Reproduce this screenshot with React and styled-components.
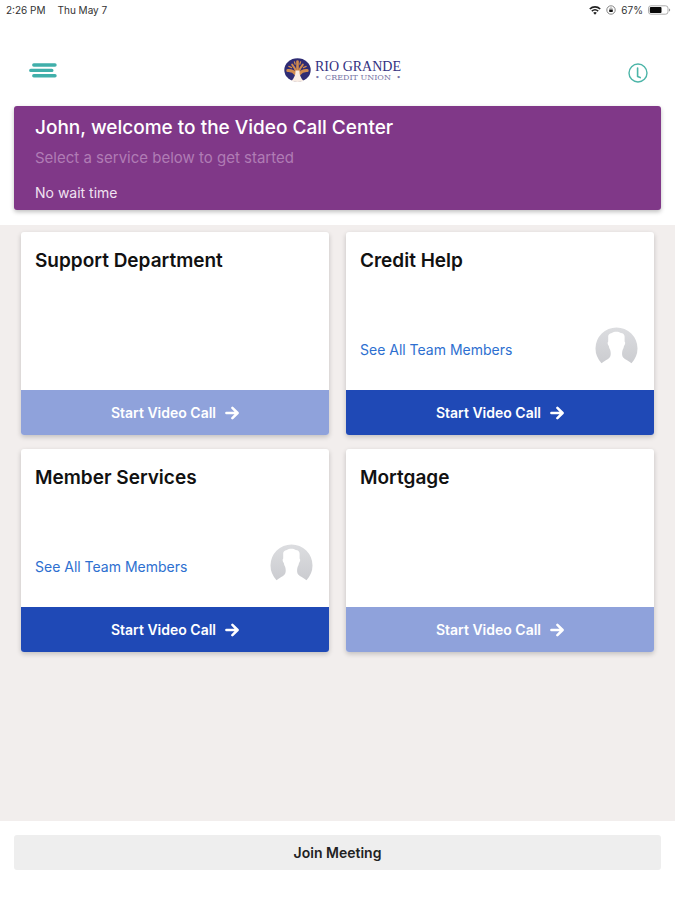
import React from "react";
import styled, { createGlobalStyle } from "styled-components";

const GlobalStyle = createGlobalStyle`
  * {
    box-sizing: border-box;
  }

  body {
    margin: 0;
    background: #fff;
    color: #111;
    font-family: Inter, "Open Sans", sans-serif;
  }

  button {
    border: 0;
    font-family: inherit;
    cursor: pointer;
  }
`;

const Page = styled.div`
  min-height: 100vh;
  display: flex;
  flex-direction: column;
`;

const StatusBar = styled.div`
  height: 20px;
  padding: 0 4px 0 6px;
  display: flex;
  align-items: center;
  justify-content: space-between;
  line-height: 20px;
  color: #333;
`;

const StatusGroup = styled.div`
  display: flex;
  align-items: center;
  gap: ${(props) => props.$gap};
  font-size: 10px;
`;

const Header = styled.header`
  height: 86px;
  padding: 0 26px;
  display: grid;
  grid-template-columns: 1fr auto 1fr;
  align-items: start;
`;

const IconButton = styled.button`
  display: flex;
  justify-self: ${(props) => props.$side};
  padding: ${(props) => props.$pad};
  background: none;
`;

const Logo = styled.div`
  display: flex;
  align-items: center;
  gap: 4px;
  padding: 38px 0 0 10px;
`;

const LogoText = styled.div`
  padding-top: 2px;
  color: #33317f;
  font-family: "Liberation Serif", serif;
`;

const LogoName = styled.div`
  font-size: 14px;
  line-height: 14px;
  white-space: nowrap;
`;

const LogoSub = styled.div`
  display: flex;
  align-items: center;
  justify-content: space-between;
  font-family: "DejaVu Serif", serif;
  font-size: 8px;
  line-height: 8px;
  color: #7775a6;
`;

const Banner = styled.section`
  margin: 0 14px 15px;
  height: 104px;
  padding: 10px 21px;
  border-radius: 3px;
  background: #803888;
  color: #fff;
  box-shadow: 0 2px 4px rgba(0, 0, 0, 0.25);
`;

const BannerTitle = styled.h1`
  margin: 0;
  font-size: 19px;
  line-height: 24px;
  font-weight: 500;
`;

const BannerText = styled.p`
  margin: 7px 0 0;
  font-size: 15px;
  line-height: 22px;
  color: #b07cb5;
`;

const WaitTime = styled.p`
  margin: 14px 0 0;
  font-size: 14px;
  line-height: 20px;
  color: #f0e2f1;
`;

const Main = styled.main`
  flex: 1;
  padding: 7px 21px 14px;
  background: #f2eeed;
`;

const Cards = styled.div`
  display: grid;
  grid-template-columns: 1fr 1fr;
  gap: 14px 17px;
`;

const Card = styled.article`
  height: 203px;
  display: flex;
  flex-direction: column;
  border-radius: 3px;
  overflow: hidden;
  background: #fff;
  box-shadow: 0 2px 5px rgba(0, 0, 0, 0.2);
`;

const CardTitle = styled.h2`
  margin: 0;
  padding: 17px 14px 0;
  font-size: 19px;
  line-height: 24px;
  font-weight: 600;
`;

const Team = styled.div`
  flex: 1;
  display: flex;
  align-items: center;
  justify-content: space-between;
  padding: 28px 16px 0 14px;
`;

const TeamLink = styled.a`
  padding-top: 8px;
  font-size: 14px;
  line-height: 20px;
  color: #2d6fd0;
  text-decoration: none;
`;

const CallButton = styled.button`
  height: 45px;
  display: flex;
  align-items: center;
  justify-content: center;
  gap: 9px;
  background: ${(props) => (props.disabled ? "#8fa2db" : "#1f49b6")};
  color: #fff;
  font-size: 14px;
  font-weight: 600;
`;

const Footer = styled.footer`
  padding: 14px 14px 30px;
  background: #fff;
`;

const JoinButton = styled.button`
  width: 100%;
  height: 35px;
  border-radius: 3px;
  background: #eee;
  color: #222;
  font-size: 14px;
  font-weight: 600;
`;

const departments = [
  { name: "Support Department", open: false },
  { name: "Credit Help", open: true },
  { name: "Member Services", open: true },
  { name: "Mortgage", open: false },
];

function WifiIcon() {
  return (
    <svg width="12" height="9" viewBox="0 0 12 9" fill="none" stroke="#222">
      <path d="M.8 3C3.8.2 8.2.2 11.2 3" strokeWidth="1.7" />
      <path d="M2.8 5.1C4.7 3.4 7.3 3.4 9.2 5.1" strokeWidth="1.5" />
      <path d="M6 8.8 4.2 6.8Q6 5.4 7.8 6.8Z" fill="#222" stroke="none" />
    </svg>
  );
}

function LockIcon() {
  return (
    <svg width="10" height="10" viewBox="0 0 10 10" fill="none" stroke="#777">
      <circle cx="5" cy="5" r="4.2" strokeWidth=".9" />
      <path d="M3.8 4.6V4a1.2 1.2 0 0 1 2.4 0v.6" strokeWidth=".7" />
      <rect x="3.2" y="4.5" width="3.6" height="2.5" rx=".4" fill="#111" stroke="none" />
    </svg>
  );
}

function BatteryIcon() {
  return (
    <svg width="23" height="10" viewBox="0 0 23 10">
      <rect x=".5" y=".8" width="19.5" height="8.4" rx="2.4" fill="#fff" stroke="#999" strokeWidth=".8" />
      <rect x="1.8" y="2" width="11.7" height="6" rx="1" fill="#080808" />
      <path d="M21 3.4v3.2q1.2-.4 1.2-1.6T21 3.4Z" fill="#999" />
    </svg>
  );
}

function MenuIcon() {
  return (
    <svg width="28" height="15" viewBox="0 0 28 15" stroke="#40afaa" strokeWidth="3.4" strokeLinecap="round">
      <path d="M4.8 2H26M1.8 7.4H22.8M4.8 12.8H26" />
    </svg>
  );
}

function ClockIcon() {
  return (
    <svg width="20" height="20" viewBox="0 0 20 20" fill="none" stroke="#4cb5a8" strokeLinecap="round" strokeLinejoin="round">
      <circle cx="10" cy="10" r="9" strokeWidth="1.4" />
      <path d="M9.6 5v8.6l2.6 1" strokeWidth="1.6" />
    </svg>
  );
}

function TreeLogo() {
  return (
    <svg width="27" height="24" viewBox="0 0 27 24">
      <ellipse cx="13.5" cy="12" rx="13.2" ry="11.8" fill="#2f2c74" />
      <g fill="none" stroke="#d18b4e" strokeLinecap="round">
        <path d="M13.5 14V3.6" strokeWidth="2.6" />
        <path d="M12.6 15Q11.6 10.6 8.2 6.6M14.4 15Q15.4 10.6 18.8 6.6" strokeWidth="2" />
        <path d="M12.2 16.4Q8.6 12.2 3.8 12.6M14.8 16.4Q18.4 12.2 23.2 12.6" strokeWidth="3" />
        <path d="M10.4 3.8l.8 2.4M16.6 3.8l-.8 2.4M4.8 8.4l2.8 1.2M22.2 8.4l-2.8 1.2" strokeWidth="1.2" />
      </g>
      <path d="M11.6 12.6h3.8q0 6.6 4.2 10.4Q13.5 25 7.4 23 11.6 19 11.6 12.6Z" fill="#f8ece3" />
    </svg>
  );
}

function Avatar() {
  return (
    <svg width="43" height="38" viewBox="0 0 43 38" role="img" aria-label="Team member">
      <defs>
        <linearGradient id="avatarFill" x1="0" y1="0" x2="0" y2="1">
          <stop offset="0" stopColor="#dcdde0" />
          <stop offset="1" stopColor="#cbccd0" />
        </linearGradient>
      </defs>
      <path
        d="M6.5 36.2A21 21 0 1 1 36.5 36.2C34 34.2 30 32.6 28.2 30.6C26.8 28.6 26.8 25.6 27.6 23C28.4 21.8 28.8 20.4 29 19C30.2 18 30.6 15.4 29.6 14.4V9.6C29.6 7.4 28 6.2 25.8 6C23.6 4.4 19 4.4 16.8 6C14.4 6.4 13.2 7.8 13.2 9.6V14.4C12.2 15.4 12.6 18 13.8 19C14 20.4 14.4 21.8 15.2 23C16 25.6 16 28.6 14.6 30.6C13 32.6 9 34.2 6.5 36.2Z"
        fill="url(#avatarFill)"
      />
    </svg>
  );
}

function ArrowIcon() {
  return (
    <svg width="14" height="14" viewBox="0 0 14 14" fill="none" stroke="#fff" strokeWidth="2.5" strokeLinecap="round" strokeLinejoin="round">
      <path d="M1.4 7H12M7.4 1.8 12.6 7 7.4 12.2" />
    </svg>
  );
}

function Department({ name, open }) {
  return (
    <Card>
      <CardTitle>{name}</CardTitle>
      <Team>
        {open && (
          <>
            <TeamLink href="#team">See All Team Members</TeamLink>
            <Avatar />
          </>
        )}
      </Team>
      <CallButton disabled={!open}>
        Start Video Call
        <ArrowIcon />
      </CallButton>
    </Card>
  );
}

function App() {
  return (
    <Page>
      <GlobalStyle />
      <StatusBar>
        <StatusGroup $gap="12px">
          <span>2:26 PM</span>
          <span>Thu May 7</span>
        </StatusGroup>
        <StatusGroup $gap="5px">
          <WifiIcon />
          <LockIcon />
          <span>67%</span>
          <BatteryIcon />
        </StatusGroup>
      </StatusBar>

      <Header>
        <IconButton $side="start" $pad="43px 3px 0" aria-label="Menu">
          <MenuIcon />
        </IconButton>
        <Logo>
          <TreeLogo />
          <LogoText>
            <LogoName>RIO GRANDE</LogoName>
            <LogoSub>
              <span>•</span>
              <span>CREDIT UNION</span>
              <span>•</span>
            </LogoSub>
          </LogoText>
        </Logo>
        <IconButton $side="end" $pad="43px 1px 0" aria-label="History">
          <ClockIcon />
        </IconButton>
      </Header>

      <Banner>
        <BannerTitle>John, welcome to the Video Call Center</BannerTitle>
        <BannerText>Select a service below to get started</BannerText>
        <WaitTime>No wait time</WaitTime>
      </Banner>

      <Main>
        <Cards>
          {departments.map((d) => (
            <Department key={d.name} name={d.name} open={d.open} />
          ))}
        </Cards>
      </Main>

      <Footer>
        <JoinButton>Join Meeting</JoinButton>
      </Footer>
    </Page>
  );
}

export default App;
